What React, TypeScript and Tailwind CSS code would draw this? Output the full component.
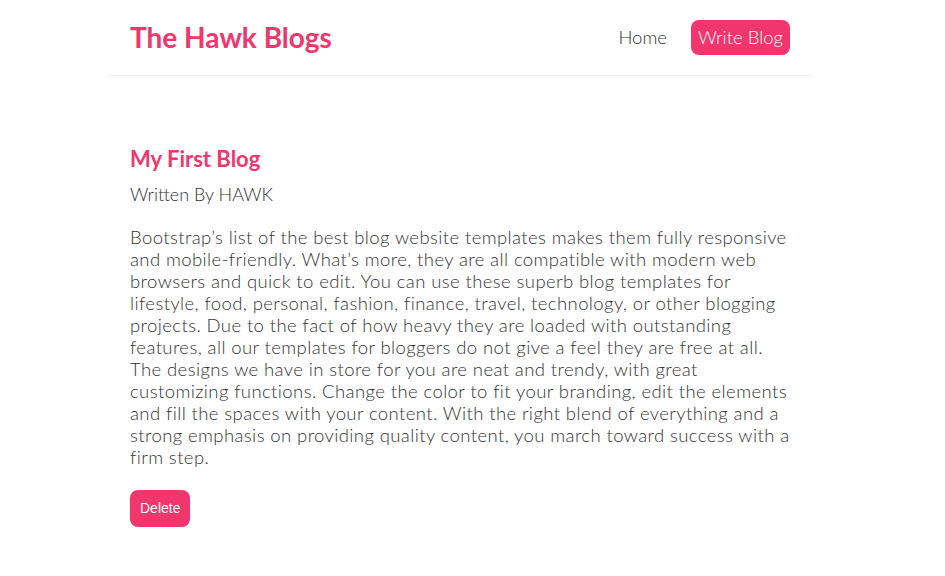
import React from "react";

const BODY =
  "Bootstrap’s list of the best blog website templates makes them fully responsive and mobile-friendly. What’s more, they are all compatible with modern web browsers and quick to edit. You can use these superb blog templates for lifestyle, food, personal, fashion, finance, travel, technology, or other blogging projects. Due to the fact of how heavy they are loaded with outstanding features, all our templates for bloggers do not give a feel they are free at all. The designs we have in store for you are neat and trendy, with great customizing functions. Change the color to fit your branding, edit the elements and fill the spaces with your content. With the right blend of everything and a strong emphasis on providing quality content, you march toward success with a firm step.";

export default function App() {
  return (
    <div className="min-h-screen bg-white font-['Lato',sans-serif] text-[#333]">
      {/* navbar */}
      <nav className="ml-[108px] flex w-[704px] items-center border-b border-[#f2f2f2] px-[22px] pb-[20px] pt-[20px]">
        <h1 className="text-[28px] font-bold leading-[35px] text-[#f1356d]">The Hawk Blogs</h1>
        <div className="ml-auto flex items-center">
          <a href="/" className="mr-[24px] text-[18.5px] font-light text-[#333]">
            Home
          </a>
          <a
            href="/create"
            className="flex h-[35px] items-center rounded-[8px] bg-[#f1356d] px-[7px] text-[18.5px] font-light text-white"
          >
            Write Blog
          </a>
        </div>
      </nav>

      {/* blog details */}
      <div className="ml-[130px] w-[662px] pt-[68px]">
        <h2 className="text-[22px] font-bold leading-[30px] text-[#f1356d]">My First Blog</h2>
        <p className="mt-[9px] text-[18px] font-light leading-[22px] text-[#333]">Written By HAWK</p>
        <div className="mt-[21px] text-[18.5px] font-light leading-[22px] tracking-[0.4px] text-[#333]">
          {BODY}
        </div>
        <button className="mt-[22px] h-[37px] rounded-[8px] bg-[#f1356d] px-[10px] font-['Liberation_Sans',sans-serif] text-[14px] text-white">
          Delete
        </button>
      </div>
    </div>
  );
}
